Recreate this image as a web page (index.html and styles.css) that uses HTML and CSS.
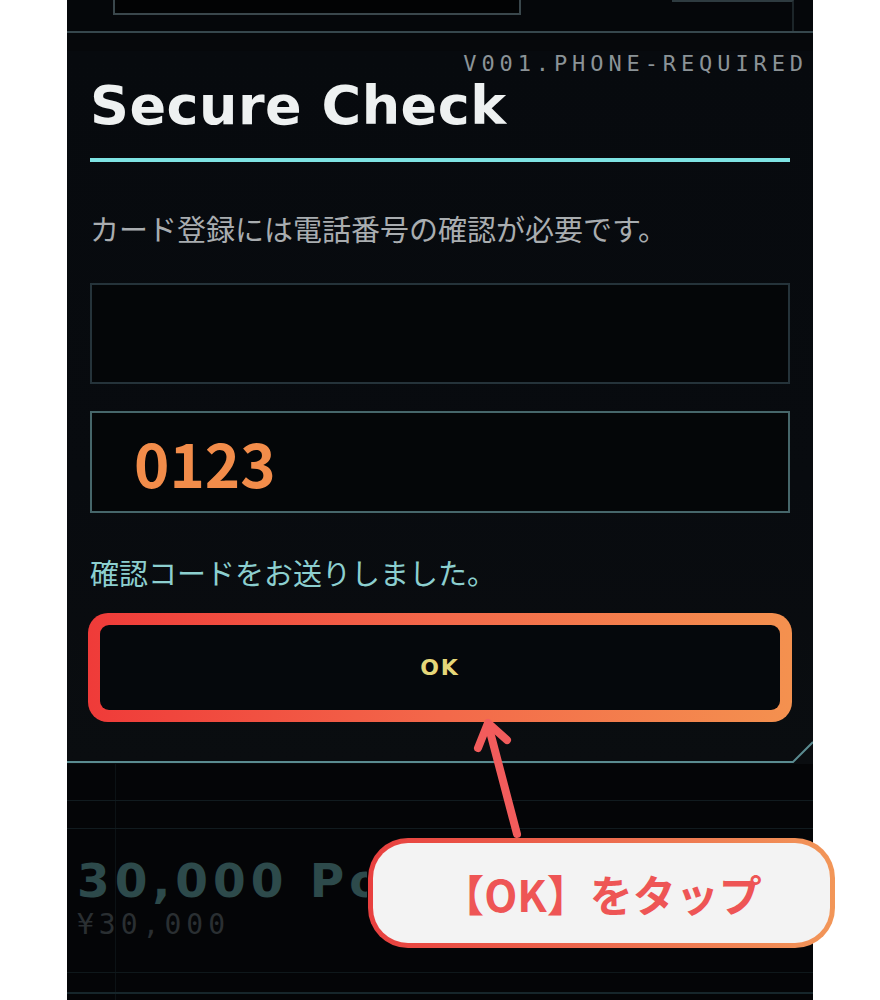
FILE: index.html
```html
<!DOCTYPE html>
<html lang="ja">
<head>
    <meta charset="UTF-8">
    <title>Secure Check</title>
    <link rel="stylesheet" href="styles.css">
</head>
<body>
    <div class="page">
        <div class="phone">
            <div class="topbar">
                <div class="slot slot-left"></div>
                <div class="slot slot-right"></div>
            </div>

            <div class="dialog">
                <div class="code">V001.PHONE-REQUIRED</div>
                <h1 class="title">Secure Check</h1>
                <div class="rule"></div>
                <p class="note">カード登録には電話番号の確認が必要です。</p>
                <div class="field"></div>
                <div class="field field-filled"><span class="digits">0123</span></div>
                <p class="sent">確認コードをお送りしました。</p>
                <div class="ok-ring">
                    <div class="ok-btn">OK</div>
                </div>
                <div class="frame-end">
                    <svg width="746" height="24" viewBox="0 0 746 24">
                        <polyline points="0,22 726,22 746,2" fill="none" stroke="#5a8b90" stroke-width="2"/>
                    </svg>
                </div>
            </div>

            <div class="lower">
                <div class="points">30,000 Points</div>
                <div class="price">¥30,000</div>
            </div>
        </div>

        <!-- annotation -->
        <svg class="arrow" width="70" height="135" viewBox="0 0 70 135">
            <g fill="none" stroke="#f25c5c" stroke-width="8" stroke-linecap="round" stroke-linejoin="round">
                <line x1="57" y1="124" x2="28" y2="14"/>
                <polyline points="18,38 28,13 47,30"/>
            </g>
        </svg>
        <div class="callout">
            <div class="callout-inner">【OK】をタップ</div>
        </div>
    </div>
</body>
</html>
```

FILE: styles.css
```css
body {
    margin: 0;
    background-color: #fff;
    font-family: 'Noto Sans CJK JP', 'Noto Sans', sans-serif;
}
.page {
    position: relative;
    width: 880px;
    height: 1000px;
    overflow: hidden;
}
.phone {
    margin-left: 67px;
    width: 746px;
    height: 1000px;
    background-color: #06080b;
    overflow: hidden;
}

/* top strip */
.topbar {
    height: 31px;
    border-bottom: 2px solid #36474d;
    background-color: #05070a;
    display: flex;
    align-items: flex-start;
}
.slot {
    box-sizing: border-box;
}
.slot-left {
    margin-left: 46px;
    width: 408px;
    height: 15px;
    border: 2px solid #3a474c;
    border-top: none;
    background-color: #020304;
}
.slot-right {
    margin-left: 151px;
    width: 122px;
    height: 31px;
    border-top: 2px solid #2e3b40;
    border-right: 2px solid #1c2529;
}

/* dialog */
.dialog {
    padding: 0 23px;
    background: linear-gradient(180deg, #070a0e 0%, #080b0f 60%, #0a0d10 100%);
}
.code {
    margin: 18px -18px 0 0;
    text-align: right;
    font-family: 'DejaVu Sans Mono', monospace;
    font-size: 22px;
    line-height: 26px;
    letter-spacing: 4.9px;
    color: #8b9397;
}
.title {
    margin: 2px 0 0;
    font-family: 'DejaVu Sans', sans-serif;
    font-weight: bold;
    font-size: 54px;
    line-height: 54px;
    letter-spacing: 0.5px;
    color: #eef1f1;
}
.rule {
    margin-top: 25px;
    height: 4px;
    background-color: #7ee3e3;
}
.note {
    margin: 46px 0 0;
    font-size: 29px;
    line-height: 40px;
    color: #a9adb0;
}
.field {
    box-sizing: border-box;
    margin-top: 35px;
    height: 101px;
    border: 2px solid #25333a;
    background-color: #040608;
}
.field-filled {
    margin-top: 27px;
    height: 102px;
    border-color: #46666a;
    display: flex;
    align-items: center;
    padding-left: 42px;
}
.digits {
    font-family: 'Noto Sans CJK JP', 'Noto Sans', sans-serif;
    font-weight: bold;
    font-size: 60px;
    line-height: 60px;
    color: #f28c4a;
}
.sent {
    margin: 39px 0 0;
    font-size: 29px;
    line-height: 40px;
    color: #8ccfcf;
}
.ok-ring {
    margin: 21px -2px 0;
    height: 109px;
    box-sizing: border-box;
    padding: 12px;
    border-radius: 20px;
    background: linear-gradient(90deg, #ef3b39 0%, #f3684a 50%, #f4914f 100%);
}
.ok-btn {
    height: 100%;
    border-radius: 9px;
    background-color: #05080c;
    display: flex;
    align-items: center;
    justify-content: center;
    font-family: 'DejaVu Sans', sans-serif;
    font-weight: bold;
    font-size: 22px;
    letter-spacing: 2px;
    color: #e5d77a;
}
.frame-end {
    margin: 18px -23px 0;
    height: 24px;
}
.frame-end svg {
    display: block;
}

/* card behind */
.lower {
    padding: 92px 0 0 10px;
    height: 236px;
    box-sizing: border-box;
    background:
        linear-gradient(#111b1f, #111b1f) no-repeat 0 36px / 100% 1px,
        linear-gradient(#111b1f, #111b1f) no-repeat 0 64px / 100% 1px,
        linear-gradient(#0f181b, #0f181b) no-repeat 0 208px / 100% 1px,
        linear-gradient(#16262b, #16262b) no-repeat 0 228px / 100% 2px,
        linear-gradient(#0c1215, #0c1215) no-repeat 48px 0 / 1px 100%,
        #040507;
}
.points {
    width: 290px;
    overflow: hidden;
    font-family: 'DejaVu Sans', sans-serif;
    font-weight: bold;
    font-size: 47px;
    line-height: 50px;
    letter-spacing: 5px;
    color: #2d4a4b;
    white-space: nowrap;
}
.price {
    margin-top: 4px;
    font-family: 'DejaVu Sans Mono', monospace;
    font-size: 28px;
    line-height: 30px;
    letter-spacing: 5px;
    color: #2a2f32;
}

/* annotation */
.arrow {
    position: absolute;
    left: 460px;
    top: 710px;
}
.callout {
    position: absolute;
    left: 368px;
    top: 838px;
    width: 467px;
    height: 110px;
    box-sizing: border-box;
    padding: 5px;
    border-radius: 40px;
    background: linear-gradient(90deg, #e8403f 0%, #ec6a4e 50%, #f29658 100%);
}
.callout-inner {
    height: 100%;
    border-radius: 35px;
    background-color: #f3f3f3;
    display: flex;
    align-items: center;
    justify-content: center;
    font-weight: bold;
    font-size: 43px;
    color: #ee5555;
}
```
